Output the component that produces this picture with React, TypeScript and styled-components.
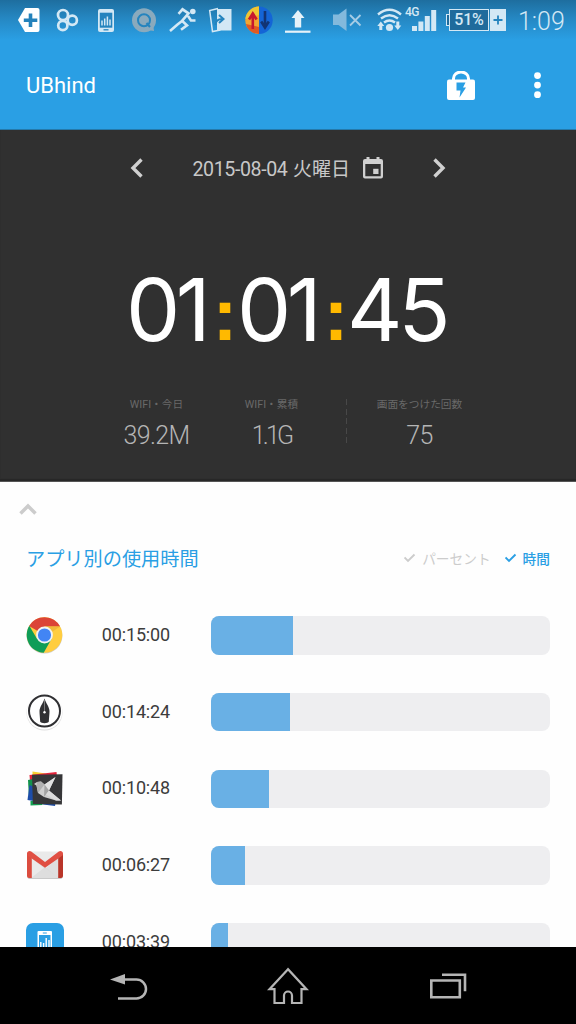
import * as React from "react";
import styled, { createGlobalStyle } from "styled-components";

const GlobalStyle = createGlobalStyle`
  * {
    box-sizing: border-box;
  }

  body {
    margin: 0;
    background: #fff;
    font-family: Roboto, "Noto Sans CJK JP", sans-serif;
  }
`;

const Screen = styled.div`
  display: flex;
  flex-direction: column;
  width: 576px;
  height: 1024px;
  overflow: hidden;
  background: #fefefe;
`;

const StatusBar = styled.header`
  display: flex;
  flex: none;
  height: 42px;
  padding-left: 12px;
  background: linear-gradient(#1e6e9f 0, #2587c2 18px, #2a9fe4 40px);
  color: #d3e8f5;
`;

const StatusSlot = styled.svg`
  display: block;
  flex: none;
  height: 42px;
`;

const Network = styled.span`
  width: 0;
  height: 12px;
  margin-top: 5px;
  font-size: 12px;
  line-height: 14px;
  font-weight: 500;
  white-space: nowrap;
  letter-spacing: -0.6px;
`;

const Battery = styled.div`
  display: flex;
  width: 60px;
  height: 22px;
  margin: 9px 0 0 5px;
`;

const BatteryTip = styled.span`
  width: 4px;
  height: 12px;
  margin: 5px -1px 0 0;
  border: 1.5px solid #d3e8f5;
  border-right: none;
  background: #1f6b9c;
`;

const BatteryLevel = styled.span`
  width: 40px;
  height: 22px;
  border: 1.5px solid #d3e8f5;
  background: #1f6b9c;
  font-size: 16px;
  line-height: 20px;
  font-weight: 500;
  text-align: center;
  letter-spacing: -0.2px;
`;

const BatteryPlus = styled.svg`
  width: 16px;
  height: 22px;
  margin-left: 1px;
`;

const Clock = styled.time`
  margin-left: 12px;
  font-size: 25px;
  line-height: 43px;
  font-weight: 300;
`;

const AppBar = styled.div`
  display: flex;
  flex: none;
  align-items: center;
  height: 88px;
  padding: 0 23px 0 26px;
  background: #2a9fe4;
  border-bottom: 1px solid #2479ab;
  color: #fff;
`;

const AppTitle = styled.h1`
  flex: 1;
  margin: 0;
  font-size: 22px;
  font-weight: 400;
  letter-spacing: 0;
`;

const Icon = styled.svg<{ w: number; h: number; gap?: number }>`
  display: block;
  flex: none;
  width: ${({ w }) => w}px;
  height: ${({ h }) => h}px;
  margin-left: ${({ gap }) => gap || 0}px;
`;

const Summary = styled.section`
  flex: none;
  height: 352px;
  background: #303030;
  border-bottom: 1px solid #555;
  box-shadow: inset 0 -2px 1px #272727;
`;

const DateRow = styled.div`
  display: flex;
  align-items: center;
  height: 76px;
  padding-left: 130px;
  color: #d0d0d0;
`;

const DateText = styled.span`
  width: 158px;
  margin: 3px 0 0 49.5px;
  font-size: 19.6px;
  line-height: 26px;
  font-weight: 400;
  letter-spacing: -0.4px;
  color: #c8c8c8;
  white-space: nowrap;
`;

const Weekday = styled.span`
  margin-left: 1px;
  font-size: 19px;
  letter-spacing: 0;
`;

const Total = styled.div`
  display: grid;
  grid-template-columns: 83px 28px 83px 28px 100px;
  height: 104px;
  margin: 53px 0 0 128px;
  color: #fff;
  font-family: Inter, Roboto, sans-serif;
  font-size: 86px;
  line-height: 102px;
`;

const Digits = styled.span`
  display: flex;
  justify-content: center;
  margin-left: -7px;
  letter-spacing: -4.5px;
  white-space: nowrap;
`;

const Colon = styled.span`
  color: #ffb900;
  font-family: "Liberation Sans", Arial, sans-serif;
  font-size: 75px;
  font-weight: 700;
  line-height: 111px;
  text-align: center;
`;

const Stats = styled.div`
  display: grid;
  grid-template-columns: 115px 115px 1px 145px;
  margin: 34px 0 0 99px;
`;

const Stat = styled.div<{ offset?: number }>`
  padding-left: ${({ offset }) => offset || 0}px;
  text-align: center;
`;

const StatLabel = styled.div`
  color: #696969;
  font-size: 10.7px;
  line-height: 16px;
  white-space: nowrap;
`;

const StatValue = styled.div<{ tight?: boolean }>`
  margin-top: 6px;
  color: #b5b5b5;
  font-size: 25px;
  line-height: 34px;
  font-weight: 300;
  letter-spacing: ${({ tight }) => (tight ? -2.8 : -0.6)}px;
`;

const Divider = styled.div`
  width: 1px;
  height: 46px;
  margin: 2px 0 0 17px;
  background: repeating-linear-gradient(#484848 0 6px, transparent 6px 9.6px);
`;

const Usage = styled.section`
  flex: 1;
  min-height: 0;
  overflow: hidden;
  padding: 0 26px;
`;

const Collapse = styled.div`
  height: 54px;
  padding: 21px 0 0;
  margin-left: -8px;
`;

const UsageHead = styled.div`
  display: flex;
  align-items: center;
  height: 46px;
  margin: -1px 0 16px;
`;

const UsageTitle = styled.h2`
  flex: 1;
  margin: 0;
  color: #2a9fe4;
  font-size: 19.2px;
  font-weight: 400;
`;

const Mode = styled.span<{ active?: boolean }>`
  display: flex;
  align-items: center;
  gap: 6px;
  margin: -1px 0 0 14px;
  color: ${({ active }) => (active ? "#2a9fe4" : "#ccc")};
  font-size: 13.7px;
  font-weight: ${({ active }) => (active ? 500 : 400)};
`;

const Row = styled.div`
  display: flex;
  align-items: center;
  height: 76.7px;
`;

const IconBox = styled.div`
  display: flex;
  flex: none;
  justify-content: center;
  width: 38px;
`;

const Duration = styled.span`
  flex: none;
  width: 106px;
  margin-top: -2px;
  color: #3c3c3c;
  font-size: 18px;
  text-align: right;
  letter-spacing: -0.15px;
`;

const Track = styled.div`
  flex: none;
  width: 339px;
  height: 38.4px;
  margin-left: 41px;
  overflow: hidden;
  border-radius: 8px;
  background: #eeeef0;
`;

const Fill = styled.div`
  height: 100%;
  background: #69b0e5;
`;

const NavBar = styled.nav`
  display: flex;
  flex: none;
  align-items: center;
  height: 77px;
  padding-left: 110px;
  background: #000;
`;

const ChromeIcon = () => (
  <Icon w={38} h={38} viewBox="0 0 38 38">
    <circle cx="18.5" cy="19.7" r="17.9" fill="#ccc" />
    <circle cx="18.5" cy="19" r="17.8" fill="#ffcd40" />
    <path d="M18.5 19 3.1 10A17.8 17.8 0 0 1 34.1 10.6H18.5z" fill="#db4437" />
    <path
      d="M3.3 9.8A17.8 17.8 0 0 0 17.7 36.8L25.5 23 18.5 19 11.1 23z"
      fill="#0f9d58"
    />
    <path d="M18.5 10.6h15.6l-9 6z" fill="#f0b93a" />
    <circle cx="18.5" cy="19" r="8.4" fill="#f3f3f3" />
    <circle cx="18.5" cy="19" r="6.6" fill="#4285f4" />
  </Icon>
);

const PenIcon = () => (
  <Icon w={38} h={38} viewBox="0 0 38 38">
    <circle cx="18.5" cy="19.6" r="18" fill="#dedede" />
    <circle cx="18.5" cy="18.8" r="17.8" fill="#fff" />
    <circle
      cx="18.5"
      cy="18"
      r="15.5"
      fill="#fff"
      stroke="#303033"
      strokeWidth="2"
    />
    <path
      d="M18.5 5.500c1 4 5 8.500 5 12.600 0 3-.5 7-.7 10.700-.6 1.800-8 1.800-8.600 0-.2-3.700-.7-7.700-.7-10.700 0-4.100 4-8.600 5-12.600z"
      fill="#303033"
    />
    <path d="M18.5 7v12" stroke="#aaa" strokeWidth=".6" />
    <circle cx="18.5" cy="19.3" r="1.2" fill="#fff" />
  </Icon>
);

const BirdIcon = () => (
  <Icon w={38} h={38} viewBox="0 0 38 38">
    <path d="m6.500 1.500 13 2-2 6-11-1z" fill="#f9d02e" />
    <path d="m3.500 5 27-3 .6 6L4.500 17z" fill="#e3243b" />
    <path d="m2 10 5-1v20l-4-.5z" fill="#12924b" />
    <path d="m3.500 15 5 2-1 14-6-1z" fill="#1d4da8" />
    <path d="m4.500 31 12-1v5l-12 .5z" fill="#14a052" />
    <path d="m16 31 14-1-1 6-12-1.500z" fill="#1d4da8" />
    <path d="m6 4.800 30.500-.5-.6 30.200-29-.6z" fill="#363638" />
    <path
      d="m8 14 3-2 4-.5 3.500 3 11-7.500-6.500 13.500L35 30.500h-5L18 27l-6-4-1.500-7.500z"
      fill="#cfcfcf"
    />
    <path d="m11 12 4-.5 3.500 3L12 23l-1.500-7.500z" fill="#b0b0b0" />
    <path d="m29.500 7-6.500 13.500-4.500-6z" fill="#e2e2e2" />
    <path d="m18.500 14.500 4.500 6-5 6.500z" fill="#a4a4a4" />
    <path d="m23 20.500 12 10h-5L20 24.500z" fill="#dcdcdc" />
  </Icon>
);

const GmailIcon = () => (
  <Icon w={38} h={30} viewBox="0 0 38 30">
    <rect x="1.5" y="2" width="35" height="27" rx="2" fill="#c9c9c9" />
    <path d="M4 1.500h30v26.500H4z" fill="#eaeaea" />
    <path d="m5 28 14-11 14 11z" fill="#dedede" />
    <path d="M5 7.500 19 19 33 7.500V28z" fill="#d7d7d7" opacity=".6" />
    <path d="M1 3.500 5.800 7v21H3a2 2 0 0 1-2-2z" fill="#db4c3f" />
    <path d="M37 3.500 32.200 7v21H35a2 2 0 0 0 2-2z" fill="#b93529" />
    <path
      d="M1 3.500C1 1.500 3.400.3 5.200 1.600L19 12 32.800 1.600C34.600.3 37 1.500 37 3.500c0 1.500-.5 2-1.500 2.800L19 17.700 2.500 6.300C1.500 5.500 1 5 1 3.500z"
      fill="#e04f43"
    />
  </Icon>
);

const UBhindIcon = () => (
  <Icon w={38} h={38} viewBox="0 0 38 38">
    <rect width="38" height="38" rx="7" fill="#2a9fe4" />
    <rect x="11.5" y="8" width="14.5" height="22" rx="1" fill="#fff" />
    <path d="M16.800 10h4" stroke="#2a9fe4" />
    <rect x="13" y="12" width="11.5" height="13" fill="#2a9fe4" />
    <path
      d="M14.800 24v-5M17.600 24v-4M20.200 24v-9M23 24v-7"
      stroke="#fff"
      strokeWidth="1.4"
    />
  </Icon>
);

const CheckIcon = () => (
  <Icon w={12} h={10} viewBox="0 0 12 10">
    <path
      d="m.5 4.500 3.500 3.500L10.500 1.500"
      fill="none"
      stroke="currentColor"
      strokeWidth="1.9"
    />
  </Icon>
);

// Slots share one coordinate space, each one shows its own stretch of it.
const Slot = ({
  x,
  to,
  children
}: {
  x: number;
  to: number;
  children: React.ReactNode;
}) => (
  <StatusSlot
    width={to - x}
    viewBox={`${x} 0 ${to - x} 42`}
    fill="none"
    stroke="currentColor"
  >
    {children}
  </StatusSlot>
);

const StatusIcons = () => (
  <React.Fragment>
    <Slot x={12} to={48}>
      <path d="M18 20 25 8h12.500q2 0 2 2v20q0 2-2 2H25z" fill="#fff" stroke="none" />
      <path d="M30.500 13.500v13.500M23.800 20.200h13.500" stroke="#2482bb" strokeWidth="3.6" />
    </Slot>
    <Slot x={48} to={88}>
      <g strokeWidth="2.7">
        <circle cx="63" cy="15" r="5" />
        <circle cx="62.8" cy="25.5" r="4.6" />
        <circle cx="72.3" cy="20.3" r="4.6" />
      </g>
    </Slot>
    <Slot x={88} to={123}>
      <rect x="98" y="9" width="16" height="23" rx="2" fill="currentColor" stroke="none" />
      <path d="M99.800 12.700h12.500v15H99.800z" fill="#2584be" stroke="none" />
      <path d="M102 25.500v-5M104.700 25.500v-7M107.400 25.500v-9M110 25.500v-6" strokeWidth="1.5" />
      <path d="M103.500 29.800h5" stroke="#2584be" strokeWidth="1.3" />
    </Slot>
    <Slot x={123} to={162}>
      <circle cx="144" cy="20.2" r="12" fill="#8aaabd" stroke="none" />
      <path d="m147 30 7 1-1-8z" fill="#8aaabd" stroke="none" />
      <circle cx="144" cy="20.2" r="6" stroke="#2584be" strokeWidth="2" />
      <path d="m146.500 23 3.500 4" stroke="#2584be" strokeWidth="2" />
    </Slot>
    <Slot x={162} to={202}>
      <circle cx="192.8" cy="11.5" r="2.8" fill="currentColor" stroke="none" />
      <path
        d="m178.500 13.800 4-4.500 6 4-6.500 7.500 5 4.500-6 4.500M188 16l3 4.500h4.500M182 21l-4.500 3.500-7.500 6.500"
        strokeWidth="2.6"
      />
    </Slot>
    <Slot x={202} to={238}>
      <path d="M217 9h14.500v21.500H217z" fill="currentColor" stroke="none" />
      <path d="m218 8.500-8.300 2 2.800 21 8-1.500" strokeWidth="1.5" />
      <path d="M215.500 25c0-4 2-6 7-6" stroke="#2584be" strokeWidth="2" />
      <path d="m219 15 4.500 4-4.500 4" stroke="#2584be" strokeWidth="2" />
    </Slot>
    <Slot x={238} to={279}>
      <path d="M259 6.500a13.700 13.700 0 0 0 0 27.400z" fill="#f2a531" stroke="none" />
      <path d="M259 6.500a13.700 13.700 0 0 1 0 27.400z" fill="#1465d6" stroke="none" />
      <path d="M259 6.500C250 7 246 14 245.300 19L259 15z" fill="#efc634" stroke="none" />
      <path d="M245.800 24c2 6.500 7 9.900 13.200 9.900V27z" fill="#e05a23" stroke="none" />
      <path d="M252.800 29V15M249 19.500l3.800-6 3.800 6" stroke="#c8192f" strokeWidth="2.6" />
      <path d="M265 11v15M261.200 21.500l3.800 6 3.800-6" stroke="#123474" strokeWidth="2.6" />
    </Slot>
    <Slot x={279} to={322}>
      <path d="m298 10 6.500 8h-3.300v9.500h-6.400V18h-3.300z" fill="#e6f2f9" stroke="none" />
      <path d="M285 31.700h25.500" stroke="#e6f2f9" strokeWidth="2.2" />
    </Slot>
    <Slot x={322} to={370}>
      <path d="M333 14.500h5.500l8-6v22.500l-8-6H333z" fill="#83b9dc" stroke="none" />
      <path d="m350 15 10.500 10.500m0-10.500L350 25.500" stroke="#a5cce5" strokeWidth="1.8" />
    </Slot>
    <Slot x={370} to={405}>
      <path d="M378 14.500q11.500-9.500 23 0M381 18.500q8.500-6.500 17 0M384 22.500q5.500-4 11 0" strokeWidth="2.4" />
      <circle cx="389.5" cy="27.5" r="3.6" fill="currentColor" stroke="none" />
      <path
        d="m377.300 26 3.500-4.500 3.500 4.500h-2v4h-3v-4zM394.300 25.500l3.500 4.500 3.500-4.500h-2v-4h-3v4z"
        fill="currentColor"
        stroke="none"
      />
    </Slot>
    <Network>4G</Network>
    <Slot x={405} to={441}>
      <path
        d="M412 26h5v5h-5zM418.400 21.500h5v9.500h-5zM424.800 16h5v15h-5zM431.200 10h5v21h-5z"
        fill="currentColor"
        stroke="none"
      />
    </Slot>
  </React.Fragment>
);

const apps = [
  { time: "00:15:00", used: 82, icon: <ChromeIcon /> },
  { time: "00:14:24", used: 78.6, icon: <PenIcon /> },
  { time: "00:10:48", used: 58.4, icon: <BirdIcon /> },
  { time: "00:06:27", used: 34.3, icon: <GmailIcon /> },
  { time: "00:03:39", used: 17.3, icon: <UBhindIcon /> }
];

const App = () => (
  <Screen>
    <GlobalStyle />
    <StatusBar>
      <StatusIcons />
      <Battery>
        <BatteryTip />
        <BatteryLevel>51%</BatteryLevel>
        <BatteryPlus viewBox="0 0 16 22">
          <rect width="16" height="22" fill="#d3e8f5" />
          <path d="M8 6.500v9M3.500 11h9" stroke="#2584be" strokeWidth="1.8" />
        </BatteryPlus>
      </Battery>
      <Clock>1:09</Clock>
    </StatusBar>

    <AppBar>
      <AppTitle>UBhind</AppTitle>
      <Icon w={28} h={30} viewBox="0 0 28 30">
        <path
          d="M6.500 11V7.500a7.500 6.500 0 0 1 15 0V11"
          fill="none"
          stroke="#fff"
          strokeWidth="3"
        />
        <rect y="8.5" width="28" height="20.5" rx="2" fill="#fff" />
        <path d="M9.500 11.500h9l-2.500 5h3L12.500 26.500l1-7H9.500z" fill="#2a9fe4" />
      </Icon>
      <Icon w={26} h={30} gap={52} viewBox="0 0 26 30">
        <g fill="#fff">
          <circle cx="10.5" cy="4.6" r="3.4" />
          <circle cx="10.5" cy="14.1" r="3.4" />
          <circle cx="10.5" cy="23.7" r="3.4" />
        </g>
      </Icon>
    </AppBar>

    <Summary>
      <DateRow>
        <Icon w={13} h={20} viewBox="0 0 13 20">
          <path d="M11.500 1.500 3 10l8.500 8.500" fill="none" stroke="#d0d0d0" strokeWidth="3.4" />
        </Icon>
        <DateText>
          2015-08-04 <Weekday>火曜日</Weekday>
        </DateText>
        <Icon w={20} h={22} gap={12.5} viewBox="0 0 20 22">
          <path
            d="M3.500 0h3v2h7V0h3v2H18q2 0 2 2v15.500q0 2-2 2H2q-2 0-2-2V4q0-2 2-2h1.500zM2.300 7v12.200h15.400V7z"
            fill="#d0d0d0"
            fillRule="evenodd"
          />
          <rect x="10.2" y="11.8" width="5.3" height="5.2" fill="#d0d0d0" />
        </Icon>
        <Icon w={13} h={20} gap={50} viewBox="0 0 13 20">
          <path d="M1.500 1.500 10 10l-8.500 8.500" fill="none" stroke="#d0d0d0" strokeWidth="3.4" />
        </Icon>
      </DateRow>

      <Total>
        <Digits>01</Digits>
        <Colon>:</Colon>
        <Digits>01</Digits>
        <Colon>:</Colon>
        <Digits>45</Digits>
      </Total>

      <Stats>
        <Stat>
          <StatLabel>WIFI・今日</StatLabel>
          <StatValue>39.2M</StatValue>
        </Stat>
        <Stat>
          <StatLabel>WIFI・累積</StatLabel>
          <StatValue tight>1.1G</StatValue>
        </Stat>
        <Divider />
        <Stat offset={34}>
          <StatLabel>画面をつけた回数</StatLabel>
          <StatValue>75</StatValue>
        </Stat>
      </Stats>
    </Summary>

    <Usage>
      <Collapse>
        <Icon w={20} h={12} viewBox="0 0 20 12">
          <path d="M2.500 10.500 10 3l7.500 7.500" fill="none" stroke="#ccc" strokeWidth="3.5" />
        </Icon>
      </Collapse>
      <UsageHead>
        <UsageTitle>アプリ別の使用時間</UsageTitle>
        <Mode>
          <CheckIcon />
          パーセント
        </Mode>
        <Mode active>
          <CheckIcon />
          時間
        </Mode>
      </UsageHead>
      {apps.map(({ time, used, icon }) => (
        <Row key={time}>
          <IconBox>{icon}</IconBox>
          <Duration>{time}</Duration>
          <Track>
            <Fill style={{ width: used }} />
          </Track>
        </Row>
      ))}
    </Usage>

    <NavBar>
      <Icon w={38} h={30} viewBox="0 0 38 30">
        <path d="M0 8.500 15 3v10.500z" fill="#b5b5b5" />
        <path
          d="M14 8.500h12.500a9.500 9.500 0 0 1 0 19H8"
          fill="none"
          stroke="#b5b5b5"
          strokeWidth="2.5"
        />
      </Icon>
      <Icon w={42} h={38} gap={119} viewBox="0 0 42 38">
        <path
          d="M21 2.200 2.500 22.200h5V36h9.500v-7.500a4 4 0 0 1 8 0V36h9.500V22.200h5z"
          fill="none"
          stroke="#b5b5b5"
          strokeWidth="2.2"
        />
      </Icon>
      <Icon w={38} h={28} gap={120} viewBox="0 0 38 28">
        <path
          d="M2.300 8.500h28.500v16.800H2.300zM13 2.700h23v16.500"
          fill="none"
          stroke="#b5b5b5"
          strokeWidth="2.6"
        />
      </Icon>
    </NavBar>
  </Screen>
);

export default App;
